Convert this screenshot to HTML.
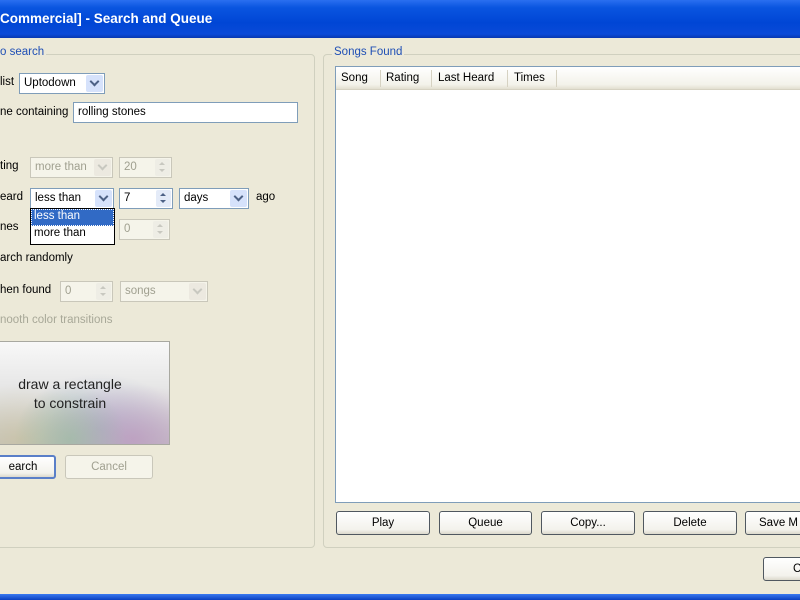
<!DOCTYPE html>
<html><head><meta charset="utf-8"><style>
*{box-sizing:border-box}
body{margin:0;width:800px;height:600px;overflow:hidden;background:#ECE9D8;font-family:"Liberation Sans",Tahoma,sans-serif;font-size:11.5px;color:#000;position:relative}
.a{position:absolute;white-space:nowrap}
.title{left:0;top:0;width:800px;height:38px;background:linear-gradient(#2a6ff0 0%,#0a55e0 20%,#0046d5 60%,#0a4ad8 90%,#0838b0 100%);color:#fff;font-weight:bold;font-size:13.5px;padding:11px 0 0 0}
.gl{color:#1f4fb5;background:#ECE9D8;padding:0 2px}
.box{background:#fff;border:1px solid #7f9db9;height:21px;padding:3px 0 0 4px}
.dis{background:#f5f4ea;border-color:#c9c7ba;color:#a0a090}
.dd{position:absolute;right:1px;top:1px;width:17px;height:17px;background:#d6e2fb;border-radius:2px}
.dd:after{content:"";position:absolute;left:5px;top:3px;width:5px;height:5px;border-right:2px solid #4d6185;border-bottom:2px solid #4d6185;transform:rotate(45deg)}
.dis .dd{background:#ece9e0}.dis .dd:after{border-color:#c8c8c0}
.sp{position:absolute;right:1px;top:1px;width:15px;height:17px;background:#e4ebf8;border-radius:2px}
.sp:before,.sp:after{content:"";position:absolute;left:4px;border-left:3px solid transparent;border-right:3px solid transparent}
.sp:before{top:3px;border-bottom:3px solid #4d6185}.sp:after{top:10px;border-top:3px solid #4d6185}
.dis .sp{background:#eeede5}.dis .sp:before{border-bottom-color:#c8c8c0}.dis .sp:after{border-top-color:#c8c8c0}
.btn{border:1px solid #505860;border-radius:3px;background:linear-gradient(#fff,#f3f2ec 80%,#dcd9cc);text-align:center;height:24px;padding-top:5px}
.gray{color:#a8a898}
</style></head><body>
<div class="a title">Commercial] - Search and Queue</div>

<div class="a" style="left:-10px;top:54px;width:325px;height:494px;border:1px solid #d0d0bf;border-radius:4px"></div>
<div class="a gl" style="left:-2px;top:46px">o search</div>

<div class="a" style="left:0;top:76px">list</div>
<div class="a box" style="left:19px;top:73px;width:86px">Uptodown<div class="dd"></div></div>
<div class="a" style="left:0;top:106px">ne containing</div>
<div class="a box" style="left:73px;top:102px;width:225px">rolling stones</div>

<div class="a" style="left:0;top:160px">ting</div>
<div class="a box dis" style="left:30px;top:157px;width:83px">more than<div class="dd"></div></div>
<div class="a box dis" style="left:119px;top:157px;width:53px">20<div class="sp"></div></div>

<div class="a" style="left:0;top:191px">eard</div>
<div class="a box" style="left:30px;top:188px;width:84px">less than<div class="dd"></div></div>
<div class="a box" style="left:119px;top:188px;width:54px">7<div class="sp"></div></div>
<div class="a box" style="left:179px;top:188px;width:70px">days<div class="dd"></div></div>
<div class="a" style="left:256px;top:191px">ago</div>

<div class="a" style="left:0;top:221px">nes</div>
<div class="a box dis" style="left:119px;top:219px;width:51px">0<div class="sp"></div></div>
<div class="a" style="left:30px;top:208px;width:85px;height:37px;background:#fff;border:1px solid #000">
<div style="background:#316ac5;color:#fff;height:17px;padding:1px 0 0 3px;outline:1px dotted #fff;outline-offset:-1px">less than</div>
<div style="padding:1px 0 0 3px">more than</div></div>

<div class="a" style="left:0;top:252px">arch randomly</div>
<div class="a" style="left:0;top:284px">hen found</div>
<div class="a box dis" style="left:60px;top:281px;width:53px">0<div class="sp"></div></div>
<div class="a box dis" style="left:120px;top:281px;width:88px">songs<div class="dd"></div></div>
<div class="a gray" style="left:0;top:314px">nooth color transitions</div>

<div class="a" style="left:-30px;top:341px;width:200px;height:104px;border:1px solid #a8a8a0;background:
radial-gradient(ellipse at 50% 95%,rgba(150,190,160,.6),transparent 40%),
radial-gradient(ellipse at 82% 95%,rgba(190,150,190,.7),transparent 40%),
radial-gradient(ellipse at 25% 95%,rgba(200,190,150,.6),transparent 40%),
radial-gradient(ellipse at 65% 85%,rgba(150,160,200,.5),transparent 45%),
linear-gradient(#f8f8f8,#e0e0e0 60%,#c8c8c8);text-align:center;font-size:14px;color:#222;padding-top:33px;line-height:19px">draw a rectangle<br>to constrain</div>

<div class="a btn" style="left:-10px;top:455px;width:66px;border:2px solid #5a7fc8;padding-top:4px">earch</div>
<div class="a btn" style="left:65px;top:455px;width:88px;border-color:#c9c7ba;background:#f5f4ea;color:#a0a090">Cancel</div>

<div class="a" style="left:323px;top:54px;width:490px;height:494px;border:1px solid #d0d0bf;border-radius:4px"></div>
<div class="a gl" style="left:332px;top:46px">Songs Found</div>
<div class="a" style="left:335px;top:66px;width:470px;height:437px;background:#fff;border:1px solid #7f9db9"></div>
<div class="a" style="left:336px;top:67px;width:470px;height:23px;background:linear-gradient(#fff,#f3f2ea 80%,#e2dfd0);border-bottom:1px solid #d6d2c2"></div>
<div class="a" style="left:341px;top:72px">Song</div>
<div class="a" style="left:380px;top:70px;height:17px;border-left:1px solid #d6d2c2"></div>
<div class="a" style="left:386px;top:72px">Rating</div>
<div class="a" style="left:431px;top:70px;height:17px;border-left:1px solid #d6d2c2"></div>
<div class="a" style="left:438px;top:72px">Last Heard</div>
<div class="a" style="left:507px;top:70px;height:17px;border-left:1px solid #d6d2c2"></div>
<div class="a" style="left:514px;top:72px">Times</div>
<div class="a" style="left:556px;top:70px;height:17px;border-left:1px solid #d6d2c2"></div>

<div class="a btn" style="left:336px;top:511px;width:94px">Play</div>
<div class="a btn" style="left:439px;top:511px;width:93px">Queue</div>
<div class="a btn" style="left:541px;top:511px;width:94px">Copy...</div>
<div class="a btn" style="left:643px;top:511px;width:94px">Delete</div>
<div class="a btn" style="left:745px;top:511px;width:94px;text-align:left;padding-left:13px">Save M</div>
<div class="a btn" style="left:763px;top:557px;width:80px;text-align:left;padding-left:29px">C</div>

<div class="a" style="left:0;top:594px;width:800px;height:6px;background:linear-gradient(#3a7af0,#0a3fc0)"></div>
</body></html>
